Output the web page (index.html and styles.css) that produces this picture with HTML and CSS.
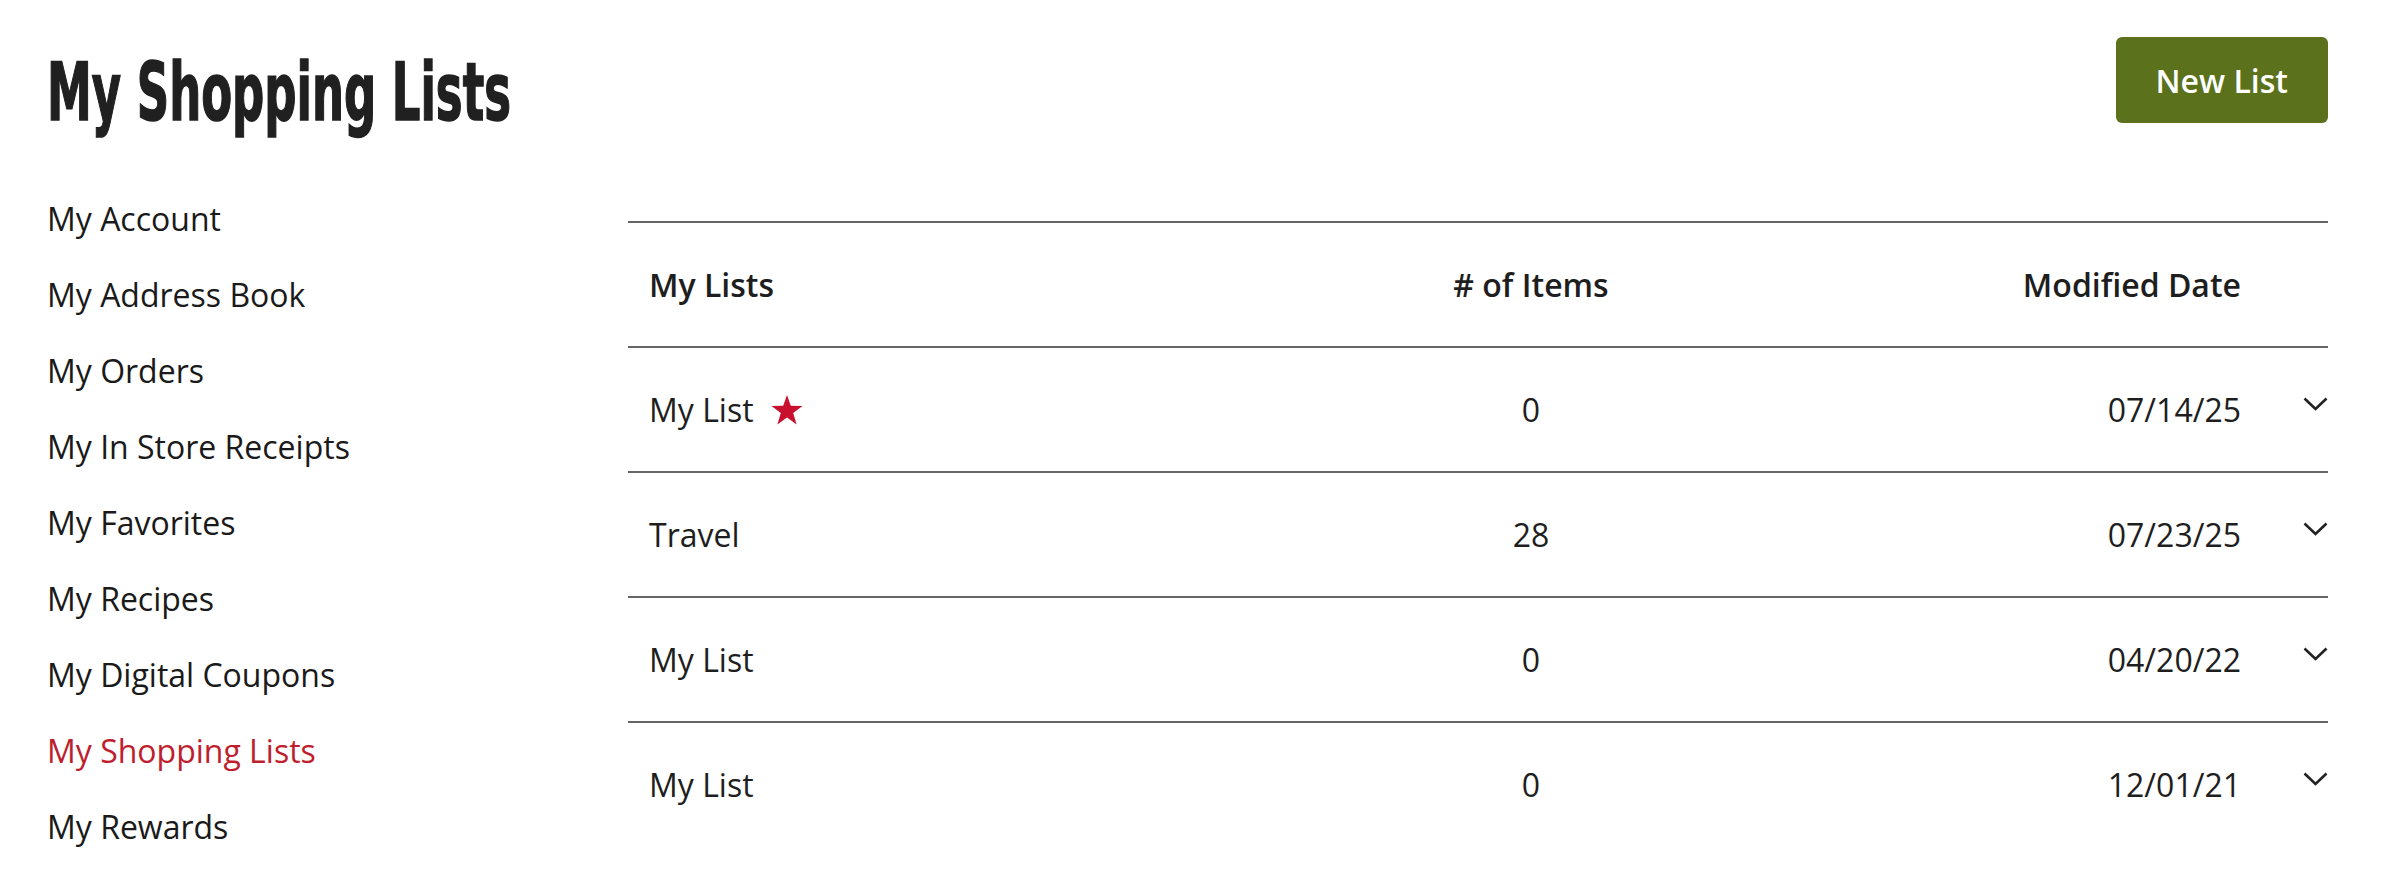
FILE: index.html
```html
<!DOCTYPE html>
<html>
<head>
    <meta charset="UTF-8">
    <title>My Shopping Lists</title>
    <link rel="stylesheet" href="styles.css">
</head>
<body>
    <div class="page">
        <div class="page-header">
            <h1 class="page-title">My Shopping Lists</h1>
            <button class="new-list-btn">New List</button>
        </div>

        <div class="main">
            <ul class="side-nav">
                <li><a href="#">My Account</a></li>
                <li><a href="#">My Address Book</a></li>
                <li><a href="#">My Orders</a></li>
                <li><a href="#">My In Store Receipts</a></li>
                <li><a href="#">My Favorites</a></li>
                <li><a href="#">My Recipes</a></li>
                <li><a href="#">My Digital Coupons</a></li>
                <li><a href="#" class="active">My Shopping Lists</a></li>
                <li><a href="#">My Rewards</a></li>
            </ul>

            <div class="lists-table">
                <div class="row head">
                    <div class="cell name">My Lists</div>
                    <div class="cell items">#&nbsp;of Items</div>
                    <div class="cell date">Modified Date</div>
                    <div class="cell toggle"></div>
                </div>

                <div class="row">
                    <div class="cell name">My List
                        <svg class="star" width="32" height="30" viewBox="0 0 32 30"><polygon points="16,0 19.8,10.8 31.5,11 22.2,18 25.6,29.5 16,22.6 6.4,29.5 9.8,18 0.5,11 12.2,10.8" fill="#c8102e"/></svg>
                    </div>
                    <div class="cell items">0</div>
                    <div class="cell date">07/14/25</div>
                    <div class="cell toggle"><svg class="chevron" width="25" height="14" viewBox="0 0 25 14"><polyline points="1.5,1.5 12.5,12 23.5,1.5" fill="none" stroke="#222" stroke-width="2.6"/></svg></div>
                </div>

                <div class="row">
                    <div class="cell name">Travel</div>
                    <div class="cell items">28</div>
                    <div class="cell date">07/23/25</div>
                    <div class="cell toggle"><svg class="chevron" width="25" height="14" viewBox="0 0 25 14"><polyline points="1.5,1.5 12.5,12 23.5,1.5" fill="none" stroke="#222" stroke-width="2.6"/></svg></div>
                </div>

                <div class="row">
                    <div class="cell name">My List</div>
                    <div class="cell items">0</div>
                    <div class="cell date">04/20/22</div>
                    <div class="cell toggle"><svg class="chevron" width="25" height="14" viewBox="0 0 25 14"><polyline points="1.5,1.5 12.5,12 23.5,1.5" fill="none" stroke="#222" stroke-width="2.6"/></svg></div>
                </div>

                <div class="row">
                    <div class="cell name">My List</div>
                    <div class="cell items">0</div>
                    <div class="cell date">12/01/21</div>
                    <div class="cell toggle"><svg class="chevron" width="25" height="14" viewBox="0 0 25 14"><polyline points="1.5,1.5 12.5,12 23.5,1.5" fill="none" stroke="#222" stroke-width="2.6"/></svg></div>
                </div>
            </div>
        </div>
    </div>
</body>
</html>
```

FILE: styles.css
```css
body {
    font-family: 'Open Sans', 'Liberation Sans', sans-serif;
    margin: 0;
    padding: 0;
    background-color: #fff;
    color: #1e1e1e;
}

.page {
    padding: 37px 75px 0 47px;
}

.page-header {
    display: flex;
    justify-content: space-between;
    align-items: flex-start;
    height: 86px;
}

.page-title {
    margin: 16px 0 0 0;
    font-family: 'DejaVu Sans Condensed', 'DejaVu Sans', sans-serif;
    font-weight: bold;
    font-size: 80px;
    line-height: 80px;
    color: #202020;
    -webkit-text-stroke: 1.5px #202020;
    transform: scaleX(0.625);
    transform-origin: left top;
    white-space: nowrap;
}

.new-list-btn {
    background-color: #5b711b;
    color: #fff;
    border: none;
    border-radius: 6px;
    height: 86px;
    padding: 0 40px;
    font-family: 'Open Sans', sans-serif;
    font-weight: 600;
    font-size: 32px;
    cursor: pointer;
}

.main {
    display: grid;
    grid-template-columns: 581px 1fr;
    margin-top: 58px;
}

.side-nav {
    list-style: none;
    margin: 0;
    padding: 0;
}

.side-nav li {
    font-size: 32px;
    line-height: 76px;
}

.side-nav a {
    color: #1a1a1a;
    text-decoration: none;
}

.side-nav a.active {
    color: #be1e2d;
}

.lists-table {
    margin-top: 40px;
}

.row {
    display: grid;
    grid-template-columns: 753px 300px 560px 87px;
    align-items: center;
    min-height: 123px;
    border-bottom: 2px solid #666;
    font-size: 32px;
}

.row:last-child {
    border-bottom: none;
}

.row.head {
    border-top: 2px solid #666;
    font-weight: 600;
}

.cell.name {
    padding-left: 21px;
    display: flex;
    align-items: center;
    gap: 17px;
}

.cell.items {
    text-align: center;
}

.cell.date {
    text-align: right;
}

.cell.toggle {
    display: flex;
    justify-content: flex-end;
    margin-bottom: 12px;
}

.star {
    display: block;
}

.chevron {
    display: block;
}
```
